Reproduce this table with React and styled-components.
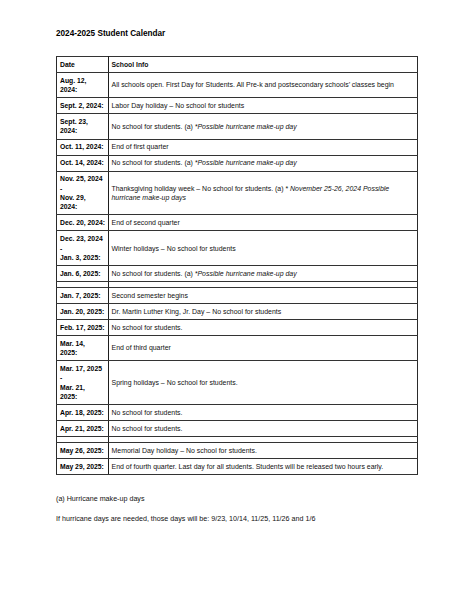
import styled, { createGlobalStyle } from "styled-components";

const GlobalStyle = createGlobalStyle`
	body {
		margin: 0;
		background: #fff;
		font-family: "Liberation Sans", Arial, sans-serif;
		color: #111;
	}
`;

const rows = [
	{ date: ["Aug. 12,", "2024:"], info: "All schools open. First Day for Students. All Pre-k and postsecondary schools’ classes begin" },
	{ date: ["Sept. 2, 2024:"], info: "Labor Day holiday – No school for students" },
	{ date: ["Sept. 23,", "2024:"], info: "No school for students. (a) ", note: "*Possible hurricane make-up day" },
	{ date: ["Oct. 11, 2024:"], info: "End of first quarter" },
	{ date: ["Oct. 14, 2024:"], info: "No school for students. (a) ", note: "*Possible hurricane make-up day" },
	{
		date: ["Nov. 25, 2024", "-", "Nov. 29,", "2024:"],
		info: "Thanksgiving holiday week – No school for students. (a) * ",
		note: "November 25-26, 2024 Possible",
		note2: "hurricane make-up days",
	},
	{ date: ["Dec. 20, 2024:"], info: "End of second quarter" },
	{ date: ["Dec. 23, 2024", "-", "Jan. 3, 2025:"], info: "Winter holidays –  No school for students" },
	{ date: ["Jan. 6, 2025:"], info: "No school for students. (a) ", note: "*Possible hurricane make-up day" },
	{ empty: true },
	{ date: ["Jan. 7, 2025:"], info: "Second semester begins" },
	{ date: ["Jan. 20, 2025:"], info: "Dr. Martin Luther King, Jr. Day – No school for students" },
	{ date: ["Feb. 17, 2025:"], info: "No school for students." },
	{ date: ["Mar. 14,", "2025:"], info: "End of third quarter" },
	{ date: ["Mar. 17, 2025", "-", "Mar. 21,", "2025:"], info: "Spring holidays – No school for students." },
	{ date: ["Apr. 18, 2025:"], info: "No school for students." },
	{ date: ["Apr. 21, 2025:"], info: "No school for students." },
	{ empty: true },
	{ date: ["May 26, 2025:"], info: "Memorial Day holiday –  No school for students." },
	{ date: ["May 29, 2025:"], info: "End of fourth quarter. Last day for all students. Students will be released two hours early." },
];

export default function App() {
	return (
		<Page>
			<GlobalStyle />
			<Title>2024-2025 Student Calendar</Title>
			<Table>
				<colgroup>
					<col style={{ width: "51.5px" }} />
					<col />
				</colgroup>
				<tbody>
					<tr>
						<DateCell>Date</DateCell>
						<InfoCell $bold>School Info</InfoCell>
					</tr>
					{rows.map((row, i) =>
						row.empty ? (
							<tr key={i}>
								<DateCell $empty />
								<InfoCell $empty />
							</tr>
						) : (
							<tr key={i}>
								<DateCell>
									{row.date.map((line, j) => (
										<div key={j}>{line}</div>
									))}
								</DateCell>
								<InfoCell>
									{row.info}
									{row.note && <Note>{row.note}</Note>}
									{row.note2 && (
										<>
											<br />
											<Note>{row.note2}</Note>
										</>
									)}
								</InfoCell>
							</tr>
						)
					)}
				</tbody>
			</Table>
			<Footnote>(a) Hurricane make-up days</Footnote>
			<Footnote>If hurricane days are needed, those days will be: 9/23, 10/14, 11/25, 11/26 and 1/6</Footnote>
		</Page>
	);
}

const Page = styled.div`
	width: 474px;
	height: 613px;
	box-sizing: border-box;
	padding: 28px 56px 0 56px;
	background: #fff;
`;

const Title = styled.div`
	font-size: 8.2px;
	line-height: 11px;
	font-weight: 700;
	color: #000;
	margin-bottom: 17px;
`;

const Table = styled.table`
	width: 362px;
	border-collapse: collapse;
	table-layout: fixed;
	border: 1px solid #2a2a2a;
`;

const Cell = styled.td`
	border-top: 1px solid #333;
	border-bottom: 1px solid #333;
	padding: ${(p) => (p.$empty ? "2.5px 3px" : "2.85px 3px")};
	line-height: 9.3px;
	font-size: 6.95px;
	vertical-align: middle;
	white-space: nowrap;
`;

const DateCell = styled(Cell)`
	font-weight: 700;
	font-size: 6.8px;
	color: #000;
	border-right: 1.5px solid #1e1e1e;
`;

const InfoCell = styled(Cell)`
	font-weight: ${(p) => (p.$bold ? 700 : 400)};
	font-size: ${(p) => (p.$bold ? "6.8px" : "6.95px")};
	color: #111;
`;

const Note = styled.em`
	font-style: italic;
`;

const Footnote = styled.p`
	margin: 0;
	font-size: 7.15px;
	line-height: 10px;
	color: #111;
	&:first-of-type {
		margin-top: 19px;
	}
	& + & {
		margin-top: 10px;
	}
`;
